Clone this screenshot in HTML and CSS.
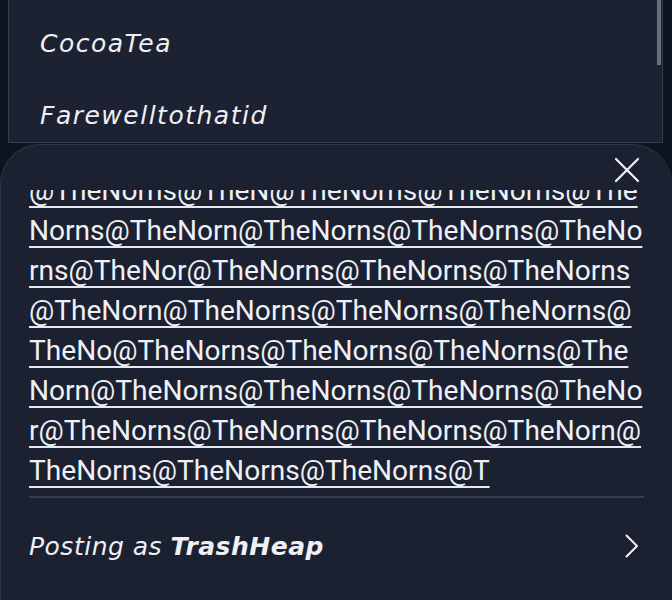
FILE: index.html
```html
<!DOCTYPE html>
<html>
<head>
<meta charset="utf-8">
<link rel="stylesheet" href="styles.css">
</head>
<body>
<div class="screen">
  <div class="dropdown">
    <div class="item">CocoaTea</div>
    <div class="item">Farewelltothatid</div>
    <div class="scrollbar"></div>
  </div>
  <div class="sheet">
    <div class="sheet-head">
      <svg class="close" width="26" height="26" viewBox="0 0 26 26"><path d="M2 2 L24 24 M24 2 L2 24" stroke="#f2f3f6" stroke-width="2.2" fill="none" stroke-linecap="round"/></svg>
    </div>
    <div class="mention-scroll">
      <div class="mention-text">
        <div class="ln">@TheNorns@TheN@TheNorns@TheNorns@The</div>
        <div class="ln">Norns@TheNorn@TheNorns@TheNorns@TheNo</div>
        <div class="ln">rns@TheNor@TheNorns@TheNorns@TheNorns</div>
        <div class="ln">@TheNorn@TheNorns@TheNorns@TheNorns@</div>
        <div class="ln">TheNo@TheNorns@TheNorns@TheNorns@The</div>
        <div class="ln">Norn@TheNorns@TheNorns@TheNorns@TheNo</div>
        <div class="ln">r@TheNorns@TheNorns@TheNorns@TheNorn@</div>
        <div class="ln">TheNorns@TheNorns@TheNorns@T</div>
      </div>
    </div>
    <div class="divider"></div>
    <div class="posting">
      <div class="posting-label">Posting as <b>TrashHeap</b></div>
      <svg class="chev" width="14" height="24" viewBox="0 0 14 24"><path d="M1.5 1.5 L12 12 L1.5 22.5" stroke="#f2f3f6" stroke-width="2" fill="none" stroke-linecap="round" stroke-linejoin="round"/></svg>
    </div>
  </div>
</div>
</body>
</html>
```

FILE: styles.css
```css
html, body {
  margin: 0;
  padding: 0;
  background: #0e1320;
}
.screen {
  width: 672px;
  height: 600px;
  overflow: hidden;
  display: flex;
  flex-direction: column;
  background: #0e1320;
}
.dropdown {
  position: relative;
  margin: 0 9px 0 8px;
  height: 143px;
  box-sizing: border-box;
  border: 1px solid #383e51;
  border-top: none;
  background: #1d2232;
  padding-top: 8px;
  padding-left: 31px;
  overflow: hidden;
  flex: none;
}
.item {
  font-family: "DejaVu Sans", sans-serif;
  font-style: oblique;
  font-size: 25px;
  letter-spacing: 1.5px;
  line-height: 72px;
  color: #eef0f5;
}
.scrollbar {
  position: absolute;
  right: 1px;
  top: 0;
  width: 4px;
  height: 65px;
  background: #6a6f7d;
}
.sheet {
  margin-top: 1px;
  flex: 1;
  background: #1c2131;
  border-top: 1px solid #30364a;
  border-left: 1px solid #30364a;
  border-radius: 40px 40px 0 0;
  display: flex;
  flex-direction: column;
}
.sheet-head {
  height: 45px;
  box-sizing: border-box;
  padding: 12px 32px 0 0;
  display: flex;
  justify-content: flex-end;
  flex: none;
}
.mention-scroll {
  height: 299px;
  overflow: hidden;
  padding-left: 28px;
  flex: none;
}
.mention-text {
  margin-top: -19px;
  font-family: Roboto, "Liberation Sans", sans-serif;
  font-size: 28.1px;
  line-height: 40px;
  color: #eef0f5;
  white-space: nowrap;
}
.ln {
  text-decoration: underline;
  text-decoration-thickness: 2px;
  text-underline-offset: 6px;
  text-decoration-color: #e6e8ee;
}
.divider {
  margin: 7px 28px 0 28px;
  height: 2px;
  background: #373d4f;
  flex: none;
}
.posting {
  height: 96px;
  display: flex;
  align-items: center;
  justify-content: space-between;
  padding: 0 33px 0 28px;
  flex: none;
}
.posting-label {
  font-family: "DejaVu Sans", sans-serif;
  font-style: oblique;
  font-size: 25px;
  letter-spacing: 0.5px;
  color: #eef0f5;
}
.posting-label b {
  font-weight: 700;
}
.chev {
  display: block;
}
```
